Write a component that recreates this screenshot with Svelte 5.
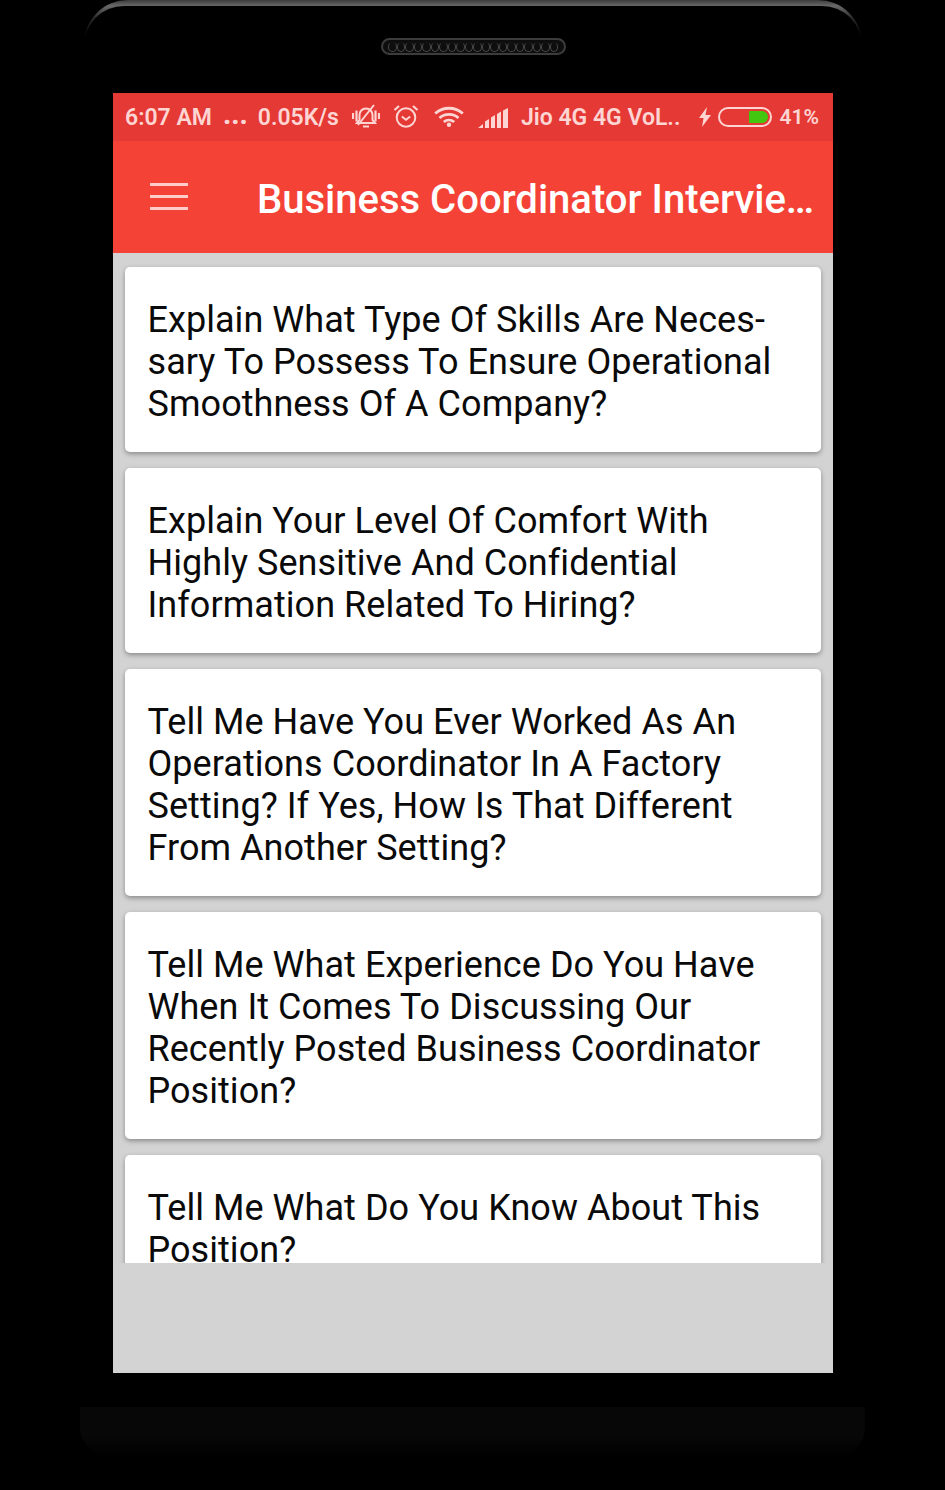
<script>
  const questions = [
    "Explain What Type Of Skills Are Neces\u00adsary To Possess To Ensure Operational Smoothness Of A Company?",
    "Explain Your Level Of Comfort With Highly Sensitive And Confidential Information Related To Hiring?",
    "Tell Me Have You Ever Worked As An Operations Coordinator In A Factory Setting? If Yes, How Is That Different From Another Setting?",
    "Tell Me What Experience Do You Have When It Comes To Discussing Our Recently Posted Business Coordinator Position?",
    "Tell Me What Do You Know About This Position?"
  ];
  const holes = Array(20).fill(0);
</script>

<div class="page">
  <div class="bezel">
    <div class="bezel-inner">
      <div class="speaker">
        {#each holes as _}
          <span class="hole"></span>
        {/each}
      </div>
    </div>
  </div>

  <div class="screen">
    <div class="status">
      <span class="time">6:07 AM</span>
      <span class="dots">...</span>
      <span class="speed">0.05K/s</span>
      <svg class="ic-mute" viewBox="0 0 28 24" width="28" height="24">
        <path d="M14 4.500c-4 0-6.500 3-6.500 6.500v5l-2.500 3h18l-2.500-3v-5c0-3.500-2.500-6.500-6.500-6.500z" fill="none" stroke="currentColor" stroke-width="2"/>
        <path d="M11 22.500h6" stroke="currentColor" stroke-width="2"/>
        <path d="M6 21 22 1" stroke="currentColor" stroke-width="2"/>
        <path d="M1 9v6M4.500 6.500v11M23.500 6.500v11M27 9v6" stroke="currentColor" stroke-width="2.200"/>
      </svg>
      <svg class="ic-alarm" viewBox="0 0 26 24" width="26" height="24">
        <circle cx="13" cy="13.500" r="9.300" fill="none" stroke="currentColor" stroke-width="2"/>
        <path d="M8.800 12.500l4.200 3.200 4.200-3.200" fill="none" stroke="currentColor" stroke-width="2"/>
        <path d="M1.500 6 6 2M24.500 6 20 2" stroke="currentColor" stroke-width="2.200"/>
      </svg>
      <svg class="ic-wifi" viewBox="0 0 30 21" width="30" height="21">
        <path d="M1.200 7.500c7.600-7 20-7 27.600 0M5.500 12c5.300-4.800 13.700-4.800 19 0M9.800 16c3-2.600 7.400-2.600 10.400 0" fill="none" stroke="currentColor" stroke-width="2.800"/>
        <circle cx="15" cy="18.800" r="2.200" fill="currentColor"/>
      </svg>
      <svg class="ic-signal" viewBox="0 0 31 20" width="31" height="20">
        <path d="M0 20 5 16v4zM7 20v-6.500l4-2.500v9zM13 20V9.500l4-2.500v13zM19 20V6l4-2.500V20zM25 20V2.500L30 0v20z" fill="currentColor"/>
      </svg>
      <span class="carrier">Jio 4G 4G VoL..</span>
      <svg class="ic-bolt" viewBox="0 0 12 20" width="12" height="20">
        <path d="M8 0 0 11h4.500L3 20l9-12H6.500z" fill="currentColor"/>
      </svg>
      <span class="battery"><span class="charge"></span></span>
      <span class="percent">41%</span>
    </div>

    <div class="toolbar">
      <div class="burger"><span></span><span></span><span></span></div>
      <div class="title">Business Coordinator Interview Questions</div>
    </div>

    <div class="list">
      {#each questions as q}
        <div class="card">{q}</div>
      {/each}
    </div>

    <div class="footer"></div>
  </div>

  <div class="chin"></div>
</div>

<style>
  :global(body) {
    background: #000;
  }

  .page {
    width: 945px;
    height: 1490px;
    background: #000;
    overflow: hidden;
    font-family: Roboto, "Liberation Sans", sans-serif;
  }

  .bezel {
    height: 93px;
    margin: 0 83px 0 84px;
    border-radius: 44px 44px 0 0;
    background: linear-gradient(#3c3c3c 0, #686868 6px, #2a2a2a 18px, #000 40px);
    padding-top: 6px;
    box-sizing: border-box;
  }

  .bezel-inner {
    height: 87px;
    background: #000;
    border-radius: 40px 40px 0 0;
    padding-top: 32px;
    box-sizing: border-box;
    display: flex;
    justify-content: center;
  }

  .speaker {
    width: 185px;
    height: 17px;
    box-sizing: border-box;
    border: 2px solid #3c3c3c;
    border-radius: 9px;
    background: #0e0e0e;
    display: flex;
    align-items: center;
    justify-content: center;
  }

  .hole {
    width: 8.500px;
    height: 10px;
    flex: none;
    border-radius: 50%;
    border: 1px solid #484848;
    border-top-color: #141414;
    box-sizing: border-box;
  }

  .screen {
    width: 720px;
    height: 1280px;
    margin-left: 113px;
    background: #d3d3d3;
    display: flex;
    flex-direction: column;
  }

  .status {
    height: 48px;
    flex: none;
    background: #e53935;
    color: #fdd5d3;
    display: flex;
    align-items: center;
    padding-left: 12px;
    font-size: 23px;
    font-weight: 600;
    white-space: nowrap;
  }

  .dots { margin-left: 11px; font-weight: 800; font-size: 28px; line-height: 1; margin-top: -4px; }
  .speed { margin-left: 10px; }
  .ic-mute { margin-left: 13px; margin-top: -2px; }
  .ic-alarm { margin-left: 13px; margin-top: -2px; }
  .ic-wifi { margin-left: 15px; margin-top: -2px; }
  .ic-signal { margin-left: 14px; margin-top: 2px; }
  .carrier { margin-left: 12px; }
  .ic-bolt { margin-left: 19px; }

  .battery {
    margin-left: 7px;
    width: 54px;
    height: 20px;
    box-sizing: border-box;
    border: 2px solid currentColor;
    border-radius: 10px;
    display: flex;
    justify-content: flex-end;
    padding: 2px;
  }

  .charge {
    width: 19px;
    background: #43c60f;
    border-radius: 1px 6px 6px 1px;
  }

  .percent { margin-left: 7px; font-size: 21px; }

  .toolbar {
    height: 112px;
    flex: none;
    background: #f44336;
    display: flex;
    align-items: center;
    padding-left: 37px;
    padding-right: 14px;
  }

  .burger {
    width: 38px;
    flex: none;
    display: flex;
    flex-direction: column;
    gap: 9px;
    margin-top: -2px;
  }

  .burger span {
    height: 3px;
    background: #ffcdc9;
  }

  .title {
    margin-left: 69px;
    min-width: 0;
    color: #fff;
    font-size: 40px;
    font-weight: 500;
    white-space: nowrap;
    overflow: hidden;
    text-overflow: ellipsis;
    padding-top: 4px;
  }

  .list {
    height: 1010px;
    flex: none;
    overflow: hidden;
    padding: 14px 12px 0;
    box-sizing: border-box;
    display: flex;
    flex-direction: column;
    gap: 16px;
  }

  .card {
    flex: none;
    background: #fff;
    border-radius: 5px;
    box-shadow: 0 2px 5px rgba(0, 0, 0, 0.35);
    padding: 32px 22px 27px 22.500px;
    font-size: 36px;
    letter-spacing: 0.05px;
    line-height: 42px;
    color: #0a0a0a;
    hyphens: manual;
  }

  .footer {
    flex: 1;
  }

  .chin {
    height: 50px;
    margin: 34px 80px 0;
    border-radius: 0 0 30px 30px;
    background: linear-gradient(#070707, #070707 60%, #000);
  }
</style>
